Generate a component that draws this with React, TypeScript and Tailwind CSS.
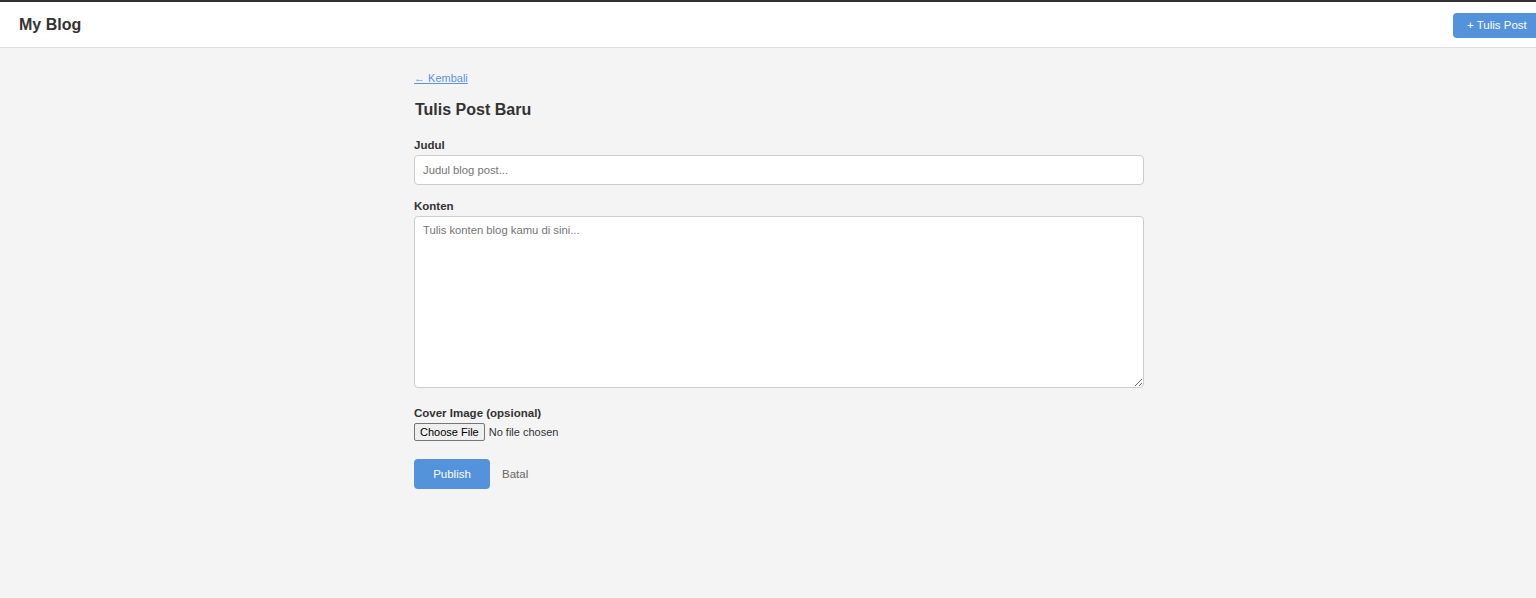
import { useState } from 'react';

export default function App() {
  const [judul, setJudul] = useState('');
  const [konten, setKonten] = useState('');

  return (
    <div className="min-h-[598px] overflow-hidden bg-[#f4f4f4] text-[#333] border-t-2 border-[#333] leading-[normal]" style={{ fontFamily: '"Liberation Sans", Arial, sans-serif' }}>
      <header className="h-[46px] bg-white border-b border-[#ddd] flex items-center justify-between pl-[19px]">
        <h1 className="text-[16px] font-bold text-[#333]">My Blog</h1>
        <button className="h-[25px] w-[87px] shrink-0 mr-[-4px] pl-[14px] text-left bg-[#5592dc] text-white text-[11.5px] rounded-[4px] mt-[1px]">
          + Tulis Post
        </button>
      </header>

      <main className="ml-[414px] w-[730px] pt-[20px]">
        <a href="#" className="text-[11px] text-[#5b93dd] underline">← Kembali</a>

        <h2 className="mt-[15px] ml-[1px] text-[16px] font-bold text-[#333]">Tulis Post Baru</h2>

        <form onSubmit={(e) => e.preventDefault()} className="mt-[20px]">
          <label className="block text-[11.5px] font-bold mb-[4px]">Judul</label>
          <input
            type="text"
            value={judul}
            onChange={(e) => setJudul(e.target.value)}
            placeholder="Judul blog post..."
            className="block w-full h-[30px] px-[8px] bg-white border border-[#ccc] rounded-[4px] text-[11.25px] placeholder:text-[#757575] focus:outline-none"
          />

          <label className="block text-[11.5px] font-bold mt-[15px] mb-[4px]">Konten</label>
          <textarea
            value={konten}
            onChange={(e) => setKonten(e.target.value)}
            placeholder="Tulis konten blog kamu di sini..."
            className="block w-full h-[172px] px-[8px] py-[7px] bg-white border border-[#ccc] rounded-[4px] text-[11.25px] placeholder:text-[#757575] focus:outline-none"
          />

          <label className="block text-[11.5px] font-bold mt-[19px] mb-[4px]">Cover Image (opsional)</label>
          <input type="file" className="block h-[18px] text-[11px] leading-[16px] file:h-[18px] file:mr-[4px] file:px-[5px] file:py-0 file:border file:border-[#767676] file:rounded-[2px] file:bg-[#efefef] file:text-[11px] file:text-black" />

          <div className="mt-[18px] flex items-center gap-[12px]">
            <button type="submit" className="w-[76px] h-[30px] bg-[#5592dc] text-white text-[11.5px] rounded-[4px]">
              Publish
            </button>
            <a href="#" className="text-[11.5px] text-[#666]">Batal</a>
          </div>
        </form>
      </main>
    </div>
  );
}
